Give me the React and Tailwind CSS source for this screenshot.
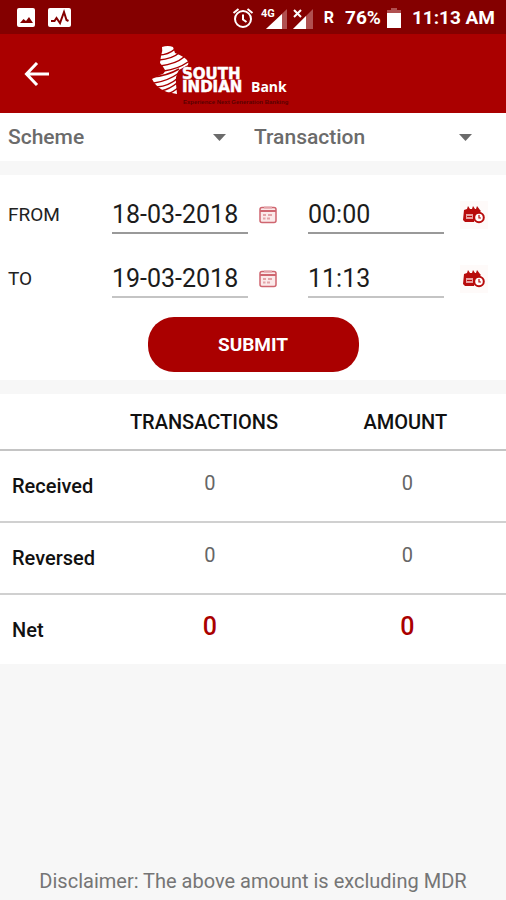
const ROWS = [
  { label: "Received", transactions: "0", amount: "0" },
  { label: "Reversed", transactions: "0", amount: "0" },
];

function StatusBar() {
  return (
    <div className="flex h-[34px] items-center bg-[#840000] pt-[2px] pr-[11px] pl-4 text-white">
      <svg width="56" height="20" viewBox="0 0 56 20" fill="none" aria-hidden="true">
        <rect x="1" y="0" width="18" height="19" rx="2" fill="#fff" />
        <path d="M4 15l3.500-4 2.500 2 3-4 4 6z" fill="#840000" />
        <rect x="32" y="0" width="23" height="19" rx="2" fill="#fff" />
        <path d="M35 13h3.500l2-3 3.500 5 4-11 2.500 8 2 1" stroke="#840000" strokeWidth="2" />
      </svg>
      <div className="ml-auto flex items-center">
        <svg width="82" height="24" viewBox="0 0 82 24" fill="none" aria-hidden="true">
          <circle cx="11" cy="13" r="8" stroke="#fff" strokeWidth="2" />
          <path d="M11 8.500v5l3.500 2.500M1.500 7l5-4M20.500 7l-5-4" stroke="#fff" strokeWidth="2" />
          <path d="M55 3v20H34z" fill="#b05050" />
          <path d="M50 8v15H34z" fill="#fff" />
          <text x="29" y="11" fill="#fff" fontFamily="Roboto, sans-serif" fontWeight="700" fontSize="11">4G</text>
          <path d="M81 3v20H61z" fill="#b05050" />
          <path d="M74 10v13H61z" fill="#fff" />
          <path d="M62 4l7 7M69 4l-7 7" stroke="#fff" strokeWidth="2" />
        </svg>
        <span className="ml-[10px] text-base font-bold">R</span>
        <span className="ml-[11px] text-[19px] font-bold">76%</span>
        <svg className="ml-[6px]" width="14" height="20" viewBox="0 0 14 20" aria-hidden="true">
          <path d="M4 0h6v2h4v4H0V2h4z" fill="#b05050" />
          <path d="M0 5h14v15H0z" fill="#fff" />
        </svg>
        <span className="ml-[11px] text-[19px] font-bold">11:13 AM</span>
      </div>
    </div>
  );
}

function BankLogo() {
  return (
    <svg width="140" height="64" viewBox="0 0 140 64" role="img" aria-label="South Indian Bank">
      <path
        d="M11 5q6-2 11 0l2 6q8 3 12 7 2 3 1 5l-9 5q-4 6-3 14l1 10-10-2Q5 46 1 37l8-4q5-1 5-5-2-4-5-7l1-7q2-5 1-9z"
        fill="#fff"
      />
      <path
        d="M8 13q9 0 16-6M8 18q13-1 20-7M9 24q16-2 24-9M13 29q14-2 24-9M1 35q15-1 27-8M3 41q14-2 25-10M6 45q12-1 21-9M10 49q9-2 16-8M17 52q5-2 10-6"
        stroke="#aa0000"
        strokeWidth="1.500"
        fill="none"
      />
      <text fill="#fff" fontFamily="'DejaVu Sans', sans-serif" fontSize="15" fontWeight="700" stroke="#fff" strokeWidth="0.500">
        <tspan x="31" y="37">SOUTH</tspan>
        <tspan x="31" y="50">INDIAN</tspan>
      </text>
      <text x="100" y="50" fontSize="14" fontWeight="700" fill="#fff" fontFamily="'Open Sans', sans-serif">Bank</text>
      <text x="32" y="62" fontSize="6" fontWeight="700" fill="#5a0000" fontFamily="'Liberation Sans', sans-serif">
        Experience Next Generation Banking
      </text>
    </svg>
  );
}

function Header() {
  return (
    <header className="flex h-[79px] items-center bg-[#aa0000]">
      <button type="button" aria-label="Back" className="ml-6 flex size-[26px] items-center justify-center">
        <svg width="26" height="24" viewBox="0 0 26 24" fill="none" stroke="#fff" strokeWidth="3" aria-hidden="true">
          <path d="M25 12H3M13 1L2.500 12 13 23" />
        </svg>
      </button>
      <div className="ml-[101px]">
        <BankLogo />
      </div>
    </header>
  );
}

function Filter({ label }) {
  return (
    <div className="relative flex-1">
      <select aria-label={label} className="h-12 w-full appearance-none bg-transparent pt-[2px] pr-10 pl-2 text-[21px] font-medium text-[#6b6b6b]">
        <option>{label}</option>
      </select>
      <svg className="pointer-events-none absolute top-[21px] right-5" width="13" height="7" viewBox="0 0 13 7" aria-hidden="true">
        <path d="M0 0h13L6.500 7z" fill="#6b6b6b" />
      </svg>
    </div>
  );
}

function CalendarIcon() {
  return (
    <svg width="20" height="18" viewBox="0 0 20 18" fill="none" aria-hidden="true">
      <rect x="2" y="1.500" width="16" height="15" rx="2" fill="#fbeaea" stroke="#cf6670" strokeWidth="1.500" />
      <path d="M2 5h16" stroke="#cf6670" strokeWidth="2" />
      <path d="M6 1.500h8" stroke="#e3a3a8" strokeWidth="2" />
      <path d="M5 9h3M10 9h4M5 12.500h2.500M9 12.500h3" stroke="#e3a3a8" strokeWidth="2" />
    </svg>
  );
}

function ScheduleIcon() {
  return (
    <svg width="22" height="18" viewBox="0 0 22 18" fill="none" aria-hidden="true">
      <path d="M1 4l3-1 1-3 2 3h2l1-3 2 3h1l1-3 3 4v5l-5 1-1 6H2L0 14z" fill="#b80c0c" />
      <path d="M3 8h7v5H3z" fill="#e9a0a0" />
      <path d="M4 10.500h5" stroke="#b80c0c" />
      <path d="M16 4v3" stroke="#b80c0c" strokeWidth="3" />
      <circle cx="16" cy="11.500" r="4.800" fill="#fff" stroke="#b80c0c" strokeWidth="2" />
      <path d="M16 9v3h2" stroke="#b80c0c" strokeWidth="1.200" />
    </svg>
  );
}

function DateRow({ label, date, time, line }) {
  return (
    <div className="grid h-16 grid-cols-[104px_1fr_60px_1fr_54px] items-center px-2">
      <span className="text-[19px] text-[#222]">{label}</span>
      <input
        aria-label={`${label} date`}
        defaultValue={date}
        className={`h-[38px] w-full min-w-0 border-b-2 bg-transparent text-[25px] text-[#1c1c1c] outline-none ${line}`}
      />
      <button type="button" aria-label={`Pick ${label} date`} className="pl-[10px]">
        <CalendarIcon />
      </button>
      <input
        aria-label={`${label} time`}
        defaultValue={time}
        className={`h-[38px] w-full min-w-0 border-b-2 bg-transparent text-[25px] text-[#1c1c1c] outline-none ${line}`}
      />
      <button type="button" aria-label={`Pick ${label} time`} className="ml-4 flex size-7 items-center justify-center bg-[#fefaf9]">
        <ScheduleIcon />
      </button>
    </div>
  );
}

function Summary() {
  return (
    <table className="w-full table-fixed border-collapse bg-white text-xl">
      <colgroup>
        <col className="w-[22%]" />
        <col className="w-[39%]" />
        <col className="w-[39%]" />
      </colgroup>
      <thead>
        <tr className="h-14 border-b-2 border-[#c4c4c4] text-[#111]">
          <td />
          <th scope="col" className="pr-3 font-medium">TRANSACTIONS</th>
          <th scope="col" className="pr-1 font-medium">AMOUNT</th>
        </tr>
      </thead>
      <tbody>
        {ROWS.map((row) => (
          <tr key={row.label} className="h-[72px] border-b-2 border-[#d0d0d0]">
            <th scope="row" className="pl-3 text-left font-medium text-[#111]">{row.label}</th>
            <td className="pb-[6px] text-center text-[#666]">{row.transactions}</td>
            <td className="pb-[6px] text-center text-[#666]">{row.amount}</td>
          </tr>
        ))}
        <tr className="h-[70px]">
          <th scope="row" className="pl-3 text-left font-medium text-[#111]">Net</th>
          <td className="pb-[6px] text-center text-[25px] font-medium text-[#aa0000]">0</td>
          <td className="pb-[6px] text-center text-[25px] font-medium text-[#aa0000]">0</td>
        </tr>
      </tbody>
    </table>
  );
}

export default function App() {
  return (
    <div className="flex min-h-screen flex-col bg-[#f7f7f7] font-[Roboto,sans-serif]">
      <StatusBar />
      <Header />
      <div className="flex h-12 bg-white pr-[14px]">
        <Filter label="Scheme" />
        <Filter label="Transaction" />
      </div>
      <form className="mt-[14px] bg-white py-2" onSubmit={(event) => event.preventDefault()}>
        <DateRow label="FROM" date="18-03-2018" time="00:00" line="border-[#999]" />
        <DateRow label="TO" date="19-03-2018" time="11:13" line="border-[#c4c4c4]" />
        <button
          type="submit"
          className="mx-auto mt-[6px] block h-[55px] w-[211px] rounded-[26px] bg-[#aa0000] pt-[2px] text-[19px] font-bold text-white"
        >
          SUBMIT
        </button>
      </form>
      <div className="mt-[14px]">
        <Summary />
      </div>
      <p className="mt-auto pb-[5px] text-center text-xl text-[#757575]">
        Disclaimer: The above amount is excluding MDR
      </p>
    </div>
  );
}
